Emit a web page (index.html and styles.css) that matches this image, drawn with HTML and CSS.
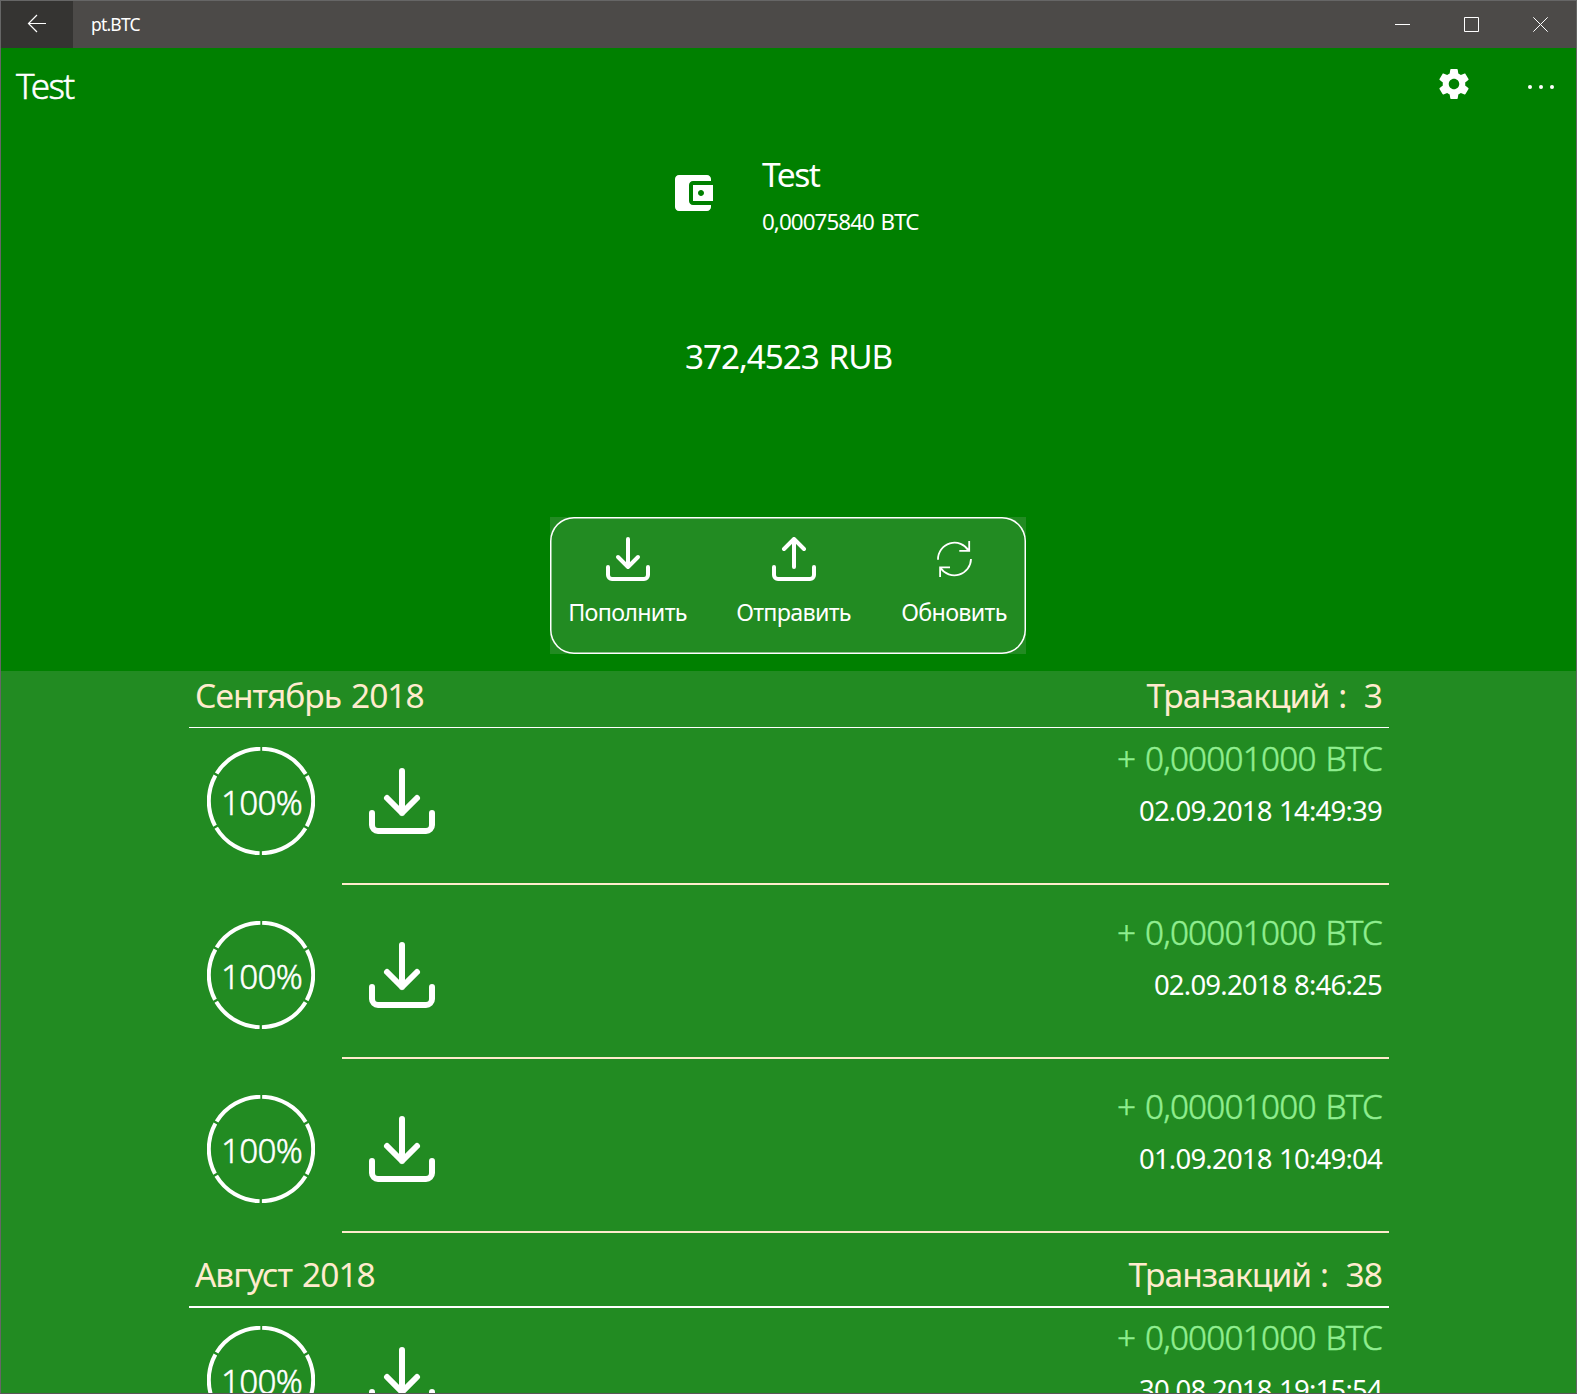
FILE: index.html
```
<!DOCTYPE html>
<html lang="ru">
<head>
<meta charset="utf-8">
<title>pt.BTC</title>
<link rel="stylesheet" href="styles.css">
</head>
<body>
<svg class="defs" aria-hidden="true">
  <symbol id="download" viewBox="0 0 22 22"><path d="M11 1v14M6 10l5 5 5-5M1 15v4a2 2 0 0 0 2 2h16a2 2 0 0 0 2-2v-4"/></symbol>
  <symbol id="upload" viewBox="0 0 22 22"><path d="M11 15V1M6 6l5-5 5 5M1 15v4a2 2 0 0 0 2 2h16a2 2 0 0 0 2-2v-4"/></symbol>
  <symbol id="ring" viewBox="0 0 108 108"><circle cx="54" cy="54" r="52.2" stroke-dasharray="52.3 2.363" stroke-dashoffset="-1.18" transform="rotate(-90 54 54)"/></symbol>
</svg>
<div class="window">
  <header class="titlebar">
    <button class="back" aria-label="Назад">
      <svg width="20" height="20" viewBox="0 0 20 20"><path d="M1.5 9.500H19M10 1L1.500 9.500 10 18"/></svg>
    </button>
    <span class="app-name">pt.BTC</span>
    <div class="controls">
      <svg width="16" height="16" viewBox="0 0 16 16"><path d="M0 7.500h15"/></svg>
      <svg width="16" height="16" viewBox="0 0 16 16"><path d="M.5 .5h14v14H.5z"/></svg>
      <svg width="16" height="16" viewBox="0 0 16 16"><path d="M.3 .3l14.400 14.400M14.700 .3L.3 14.700"/></svg>
    </div>
  </header>

  <section class="hero">
    <div class="command-bar">
      <h1>Test</h1>
      <svg class="gear" width="36" height="36" viewBox="0 0 24 24"><path d="M19.430 12.980c.04-.32.07-.64.07-.98s-.03-.66-.07-.98l2.110-1.650c.19-.15.24-.42.12-.64l-2-3.460c-.12-.22-.39-.3-.61-.22l-2.490 1c-.52-.4-1.080-.73-1.690-.98l-.38-2.650C14.460 2.180 14.250 2 14 2h-4c-.25 0-.46.18-.49.42l-.38 2.650c-.61.25-1.170.59-1.690.98l-2.490-1c-.23-.09-.49 0-.61.22l-2 3.460c-.13.22-.07.49.12.64l2.110 1.650c-.04.32-.07.65-.07.98s.03.66.07.98l-2.110 1.650c-.19.15-.24.42-.12.64l2 3.460c.12.22.39.3.61.22l2.490-1c.52.4 1.080.73 1.690.98l.38 2.650c.03.24.24.42.49.42h4c.25 0 .46-.18.49-.42l.38-2.650c.61-.25 1.170-.59 1.690-.98l2.490 1c.23.09.49 0 .61-.22l2-3.460c.12-.22.07-.49-.12-.64l-2.110-1.650zM12 15.500c-1.930 0-3.500-1.570-3.500-3.500s1.570-3.500 3.500-3.500 3.500 1.570 3.500 3.500-1.570 3.500-3.500 3.500z"/></svg>
      <svg class="more" width="28" height="6" viewBox="0 0 28 6"><circle cx="3" cy="3" r="2"/><circle cx="14" cy="3" r="2"/><circle cx="25" cy="3" r="2"/></svg>
    </div>
    <div class="wallet">
      <svg width="48" height="48" viewBox="0 0 24 24"><path d="M21 18v1c0 1.100-.9 2-2 2H5c-1.110 0-2-.9-2-2V5c0-1.100.89-2 2-2h14c1.100 0 2 .9 2 2v1h-9c-1.110 0-2 .9-2 2v8c0 1.100.89 2 2 2h9zm-9-2h10V8H12v8zm4-2.500c-.83 0-1.500-.67-1.500-1.500s.67-1.500 1.500-1.500 1.500.67 1.500 1.500-.67 1.500-1.500 1.500z"/></svg>
      <div>
        <div class="wallet-name">Test</div>
        <div class="wallet-balance">0,00075840 BTC</div>
      </div>
    </div>
    <div class="fiat">372,4523 RUB</div>
    <div class="actions">
      <button class="action"><svg class="line-icon" width="44" height="44"><use href="#download"/></svg>Пополнить</button>
      <button class="action"><svg class="line-icon" width="44" height="44"><use href="#upload"/></svg>Отправить</button>
      <button class="action"><svg class="refresh" width="44" height="44" viewBox="0 0 44 44"><path d="M6 22.700A16.600 16.600 0 0 1 36.800 13.700M37.200 4v9.800H27.300M39 22A16.600 16.600 0 0 1 8.600 31M8.100 40V30.400H18"/></svg>Обновить</button>
    </div>
  </section>

  <main class="history">
    <section>
      <div class="month"><span>Сентябрь 2018</span><span class="count">Транзакций :  3</span></div>
      <div class="tx">
        <div class="ring"><svg><use href="#ring"/></svg><span>100%</span></div>
        <div class="tx-body"><svg class="line-icon" width="66" height="66"><use href="#download"/></svg><div class="tx-info"><div class="amount">+ 0,00001000 BTC</div><div class="date">02.09.2018 14:49:39</div></div></div>
      </div>
      <div class="tx">
        <div class="ring"><svg><use href="#ring"/></svg><span>100%</span></div>
        <div class="tx-body"><svg class="line-icon" width="66" height="66"><use href="#download"/></svg><div class="tx-info"><div class="amount">+ 0,00001000 BTC</div><div class="date">02.09.2018 8:46:25</div></div></div>
      </div>
      <div class="tx">
        <div class="ring"><svg><use href="#ring"/></svg><span>100%</span></div>
        <div class="tx-body"><svg class="line-icon" width="66" height="66"><use href="#download"/></svg><div class="tx-info"><div class="amount">+ 0,00001000 BTC</div><div class="date">01.09.2018 10:49:04</div></div></div>
      </div>
    </section>
    <section>
      <div class="month month-thick"><span>Август 2018</span><span class="count">Транзакций :  38</span></div>
      <div class="tx">
        <div class="ring"><svg><use href="#ring"/></svg><span>100%</span></div>
        <div class="tx-body"><svg class="line-icon" width="66" height="66"><use href="#download"/></svg><div class="tx-info"><div class="amount">+ 0,00001000 BTC</div><div class="date">30.08.2018 19:15:54</div></div></div>
      </div>
    </section>
  </main>
</div>
</body>
</html>
```
FILE: styles.css
```
* { box-sizing: border-box; }

body {
  margin: 0;
  color: #fff;
  font-family: "Noto Sans", "Open Sans", sans-serif;
}

svg { display: block; flex: none; }
.defs { display: none; }

button {
  border: 0;
  padding: 0;
  background: none;
  color: inherit;
  font: inherit;
}

.window {
  display: flex;
  flex-direction: column;
  height: 1394px;
  overflow: hidden;
  border: 1px solid #666;
  border-bottom-color: #5a5658;
  background: #228b22;
}

/* title bar */
.titlebar {
  display: flex;
  flex: none;
  align-items: center;
  height: 47px;
  background: #4c4a48;
}
.titlebar svg { fill: none; stroke: #fff; stroke-width: 1; }
.back {
  display: grid;
  width: 72px;
  height: 47px;
  padding: 13px 0 0 26px;
  background: #353432;
}
.back svg { stroke-width: 1.2; }
.app-name {
  margin-left: 18px;
  font-size: 17.5px;
  line-height: 47px;
  letter-spacing: -0.8px;
}
.controls {
  display: flex;
  gap: 53px;
  margin: 1px 27px 0 auto;
}

/* wallet summary */
.hero {
  display: flex;
  flex: none;
  flex-direction: column;
  height: 623px;
  background: #008000;
}
.command-bar {
  display: flex;
  align-items: center;
  height: 74px;
  padding: 0 21px 0 15px;
}
h1 {
  margin: 0;
  font-size: 35px;
  font-weight: 300;
  letter-spacing: -1.5px;
}
/* weight between light and regular */
h1, .ring span, .amount { -webkit-text-stroke: 0.5px currentColor; }

.gear { margin: 0 55px 2px auto; fill: #fff; }
.more { margin-top: 4px; fill: #fff; }

.wallet {
  display: flex;
  gap: 45px;
  margin-top: 29px;
  padding-left: 668px;
}
.wallet svg { margin-top: 18px; fill: #fff; }
.wallet-name {
  font-size: 33.6px;
  line-height: 46px;
  letter-spacing: -1.5px;
}
.wallet-balance {
  margin-top: 10px;
  font-size: 22.4px;
  line-height: 30px;
  letter-spacing: -0.94px;
  word-spacing: 1.8px;
}
.fiat {
  margin-top: 96px;
  font-size: 33.3px;
  line-height: 46px;
  letter-spacing: -1.05px;
  word-spacing: 2.2px;
  text-align: center;
}
.actions {
  display: grid;
  grid-template-columns: 155px 177px 144px;
  width: 476px;
  height: 137px;
  margin: 138px 0 0 549px;
  background: #228b22;
  position: relative;
}
.actions::after {
  content: "";
  position: absolute;
  inset: 0;
  border-radius: 24px;
  box-shadow: inset 0 0 0 1.5px #fff;
}
.action {
  display: flex;
  flex-direction: column;
  align-items: center;
  padding-top: 20px;
  font-size: 23.3px;
  line-height: 32px;
  letter-spacing: -0.7px;
}
.action svg { margin-bottom: 15px; }

.line-icon {
  fill: none;
  stroke: #fff;
  stroke-width: 2;
  stroke-linecap: round;
  stroke-linejoin: round;
}
.refresh { fill: none; stroke: #fff; stroke-width: 1.8; }

/* transaction history */
.history {
  width: 1200px;
  margin-left: 188px;
}
.month {
  display: flex;
  justify-content: space-between;
  height: 57px;
  padding: 0 7px 0 6px;
  border-bottom: 1px solid #fff;
  color: #ffebcd;
  font-size: 33.5px;
  line-height: 48px;
  letter-spacing: -1px;
  word-spacing: 2.3px;
}
.month-thick {
  height: 58px;
  margin-bottom: -1px;
  border-bottom-width: 2px;
}
.count {
  white-space: pre;
  letter-spacing: -0.93px;
  word-spacing: 1px;
}

.tx { display: flex; height: 174px; }
.ring {
  display: grid;
  width: 108px;
  height: 108px;
  margin: 19px 27px 0 18px;
}
.ring > * { grid-area: 1 / 1; }
.ring svg {
  width: 108px;
  height: 108px;
  fill: none;
  stroke: #fff;
  stroke-width: 4;
}
.ring span {
  padding-left: 1px;
  font-size: 33.3px;
  font-weight: 300;
  line-height: 110px;
  letter-spacing: -0.8px;
  text-align: center;
}
.tx-body {
  display: flex;
  flex: 1;
  justify-content: space-between;
  height: 157px;
  padding: 6px 7px 0 27px;
  border-bottom: 2px solid #ffebcd;
}
.tx-body .line-icon { margin-top: 34px; }
.tx-info { text-align: right; }
.amount {
  color: #90ee90;
  font-size: 33.3px;
  font-weight: 300;
  line-height: 48px;
  letter-spacing: -0.77px;
  word-spacing: 1.8px;
}
.date {
  margin-top: 11px;
  font-size: 27.5px;
  line-height: 36px;
  letter-spacing: -0.78px;
  word-spacing: 1px;
}
```
